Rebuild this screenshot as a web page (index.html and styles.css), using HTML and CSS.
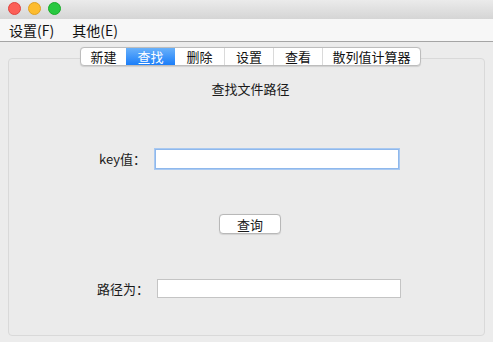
FILE: index.html
```html
<!DOCTYPE html>
<html lang="zh">
<head>
<meta charset="utf-8">
<title>查找</title>
<link rel="stylesheet" href="styles.css">
</head>
<body>
<div class="window">
  <div class="titlebar">
    <span class="light red"></span>
    <span class="light yellow"></span>
    <span class="light green"></span>
  </div>
  <div class="menubar">
    <span class="menu">设置(F)</span>
    <span class="menu">其他(E)</span>
  </div>
  <div class="content">
    <div class="tabs">
      <span class="tab t-first">新建</span>
      <span class="tab active">查找</span>
      <span class="tab">删除</span>
      <span class="tab">设置</span>
      <span class="tab">查看</span>
      <span class="tab t-last">散列值计算器</span>
    </div>
    <div class="panel">
      <div class="heading">查找文件路径</div>
      <div class="row row-key">
        <span class="label">key值：</span>
        <span class="input focus"></span>
      </div>
      <div class="row row-btn">
        <span class="button">查询</span>
      </div>
      <div class="row row-path">
        <span class="label">路径为：</span>
        <span class="input"></span>
      </div>
    </div>
  </div>
</div>
</body>
</html>
```
FILE: styles.css
```css
* { box-sizing: border-box; }
html, body { margin: 0; padding: 0; }
body {
  width: 493px;
  height: 342px;
  overflow: hidden;
  background: #ececec;
  font-family: "Noto Sans CJK SC", "Liberation Sans", sans-serif;
  color: #1a1a1a;
}
.window { width: 493px; height: 342px; display: flex; flex-direction: column; }
.titlebar {
  height: 19px;
  background: linear-gradient(#ebebeb, #d5d5d5);
  display: flex;
  align-items: center;
  padding-left: 8px;
  gap: 7px;
  padding-bottom: 3px;
}
.light { width: 13px; height: 13px; border-radius: 50%; display: block; }
.red { background: #fc5f57; border: 1px solid #e0443e; }
.yellow { background: #fdbc2e; border: 1px solid #dea123; }
.green { background: #28c840; border: 1px solid #1aab29; }
.menubar {
  height: 23px;
  background: #f7f7f7;
  border-bottom: 1px solid #a5a5a5;
  display: flex;
  align-items: center;
  padding-left: 9px;
  gap: 18px;
  font-size: 14px;
  color: #111;
}
.menu { line-height: 20px; }
.content { flex: 1; padding-top: 5px; display: flex; flex-direction: column; }
.tabs {
  position: relative;
  z-index: 1;
  align-self: flex-start;
  margin-left: 80px;
  margin-bottom: -8px;
  display: flex;
  height: 19px;
  background: #fff;
  border: 1px solid #bdbdbd;
  border-radius: 4px;
  font-size: 13px;
  box-shadow: 0 0.5px 1px rgba(0,0,0,0.12);
}
.tab {
  width: 49px;
  display: flex;
  align-items: center;
  justify-content: center;
  border-left: 1px solid #dadada;
  line-height: 17px;
  color: #111;
}
.t-first { width: 45px; border-left: none; border-radius: 3px 0 0 3px; }
.t-last { width: 98px; border-radius: 0 3px 3px 0; }
.tab.active {
  background: linear-gradient(#69b1fa, #1b7ef9);
  color: #fff;
  border-left: none;
  width: 49px;
}
.tab.active + .tab { border-left: none; }
.panel {
  margin: 0 8px;
  height: 278px;
  background: #ebebeb;
  border: 1px solid #d9d9d9;
  border-radius: 4px;
  display: flex;
  flex-direction: column;
}
.heading {
  margin-top: 21px;
  height: 18px;
  line-height: 18px;
  text-align: center;
  font-size: 13px;
  padding-left: 8px;
}
.row { display: flex; align-items: center; font-size: 13px; }
.row-key { margin-top: 51px; height: 20px; padding-left: 90px; gap: 9px; }
.row-btn { margin-top: 45px; height: 20px; padding-left: 210px; }
.row-path { margin-top: 45px; height: 19px; padding-left: 88px; gap: 8px; }
.label { line-height: 18px; }
.input {
  display: block;
  width: 244px;
  height: 19px;
  background: #fff;
  border: 1px solid #c4c4c4;
}
.input.focus {
  height: 20px;
  border: 1px solid #8fb8ec;
  box-shadow: 0 0 0 1px #a9c9f1;
}
.button {
  width: 62px;
  height: 20px;
  background: #fff;
  border: 1px solid #b8b8b8;
  border-radius: 4px;
  display: flex;
  align-items: center;
  justify-content: center;
  font-size: 13px;
  box-shadow: 0 0.5px 1px rgba(0,0,0,0.1);
}
```
